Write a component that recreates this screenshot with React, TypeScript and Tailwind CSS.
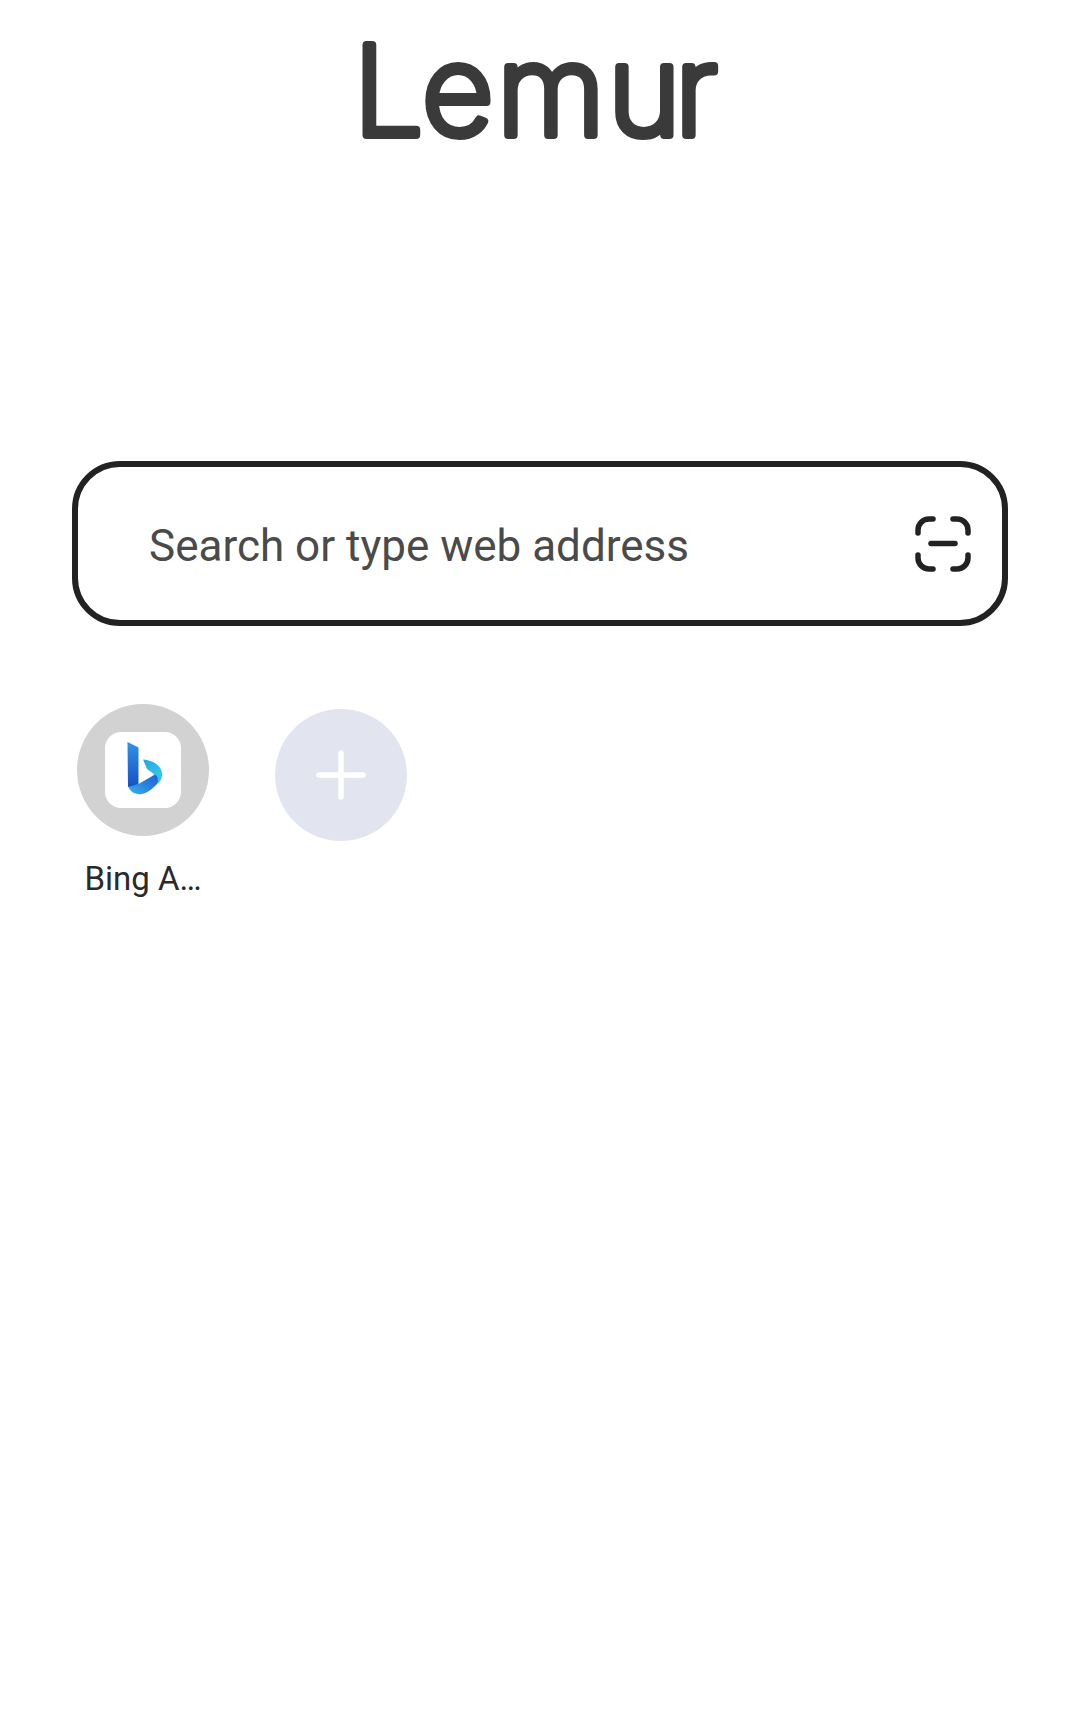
// App.tsx
// Pantalla de inicio: logo, buscador y accesos directos

function LemurLogo() {
  return (
    <svg width="400" height="170" viewBox="0 0 400 170" aria-label="Lemur">
      <text
        x="13.5 82 157 268 335"
        y="120"
        fontFamily="Inter, sans-serif"
        fontSize="124"
        fontWeight="200"
        fill="#3a3a3a"
        stroke="#3a3a3a"
        strokeWidth="8"
        strokeLinejoin="round"
      >
        Lemur
      </text>
    </svg>
  );
}

function ScanIcon() {
  return (
    <svg width="60" height="60" viewBox="0 0 60 60" fill="none" stroke="#222222" strokeWidth="5.5" strokeLinecap="round">
      <path d="M5 19v-3a11 11 0 0 1 11-11h4" />
      <path d="M40 5h4a11 11 0 0 1 11 11v3" />
      <path d="M5 41v3a11 11 0 0 0 11 11h4" />
      <path d="M40 55h4a11 11 0 0 0 11-11v-3" />
      <path d="M18 29.5h24" />
    </svg>
  );
}

function BingIcon() {
  return (
    <svg width="76" height="76" viewBox="0 0 76 76">
      <defs>
        <linearGradient id="bingStem" x1="0" y1="0" x2="0" y2="1">
          <stop offset="0" stopColor="#2f93e6" />
          <stop offset="1" stopColor="#1650c6" />
        </linearGradient>
        <linearGradient id="bingBand" x1="0" y1="1" x2="1" y2="0">
          <stop offset="0" stopColor="#35b7ec" />
          <stop offset="0.55" stopColor="#2a7ee2" />
          <stop offset="1" stopColor="#1d5fd6" />
        </linearGradient>
        <linearGradient id="bingTop" x1="0" y1="0" x2="1" y2="1">
          <stop offset="0" stopColor="#2ba4df" />
          <stop offset="1" stopColor="#2fd0ee" />
        </linearGradient>
      </defs>
      <path d="M38 27.5 C48 28.5 56 33 57 41 C57.5 45 56 49 52.5 52 L49 42 L42 37 Z" fill="url(#bingTop)" />
      <path d="M23 53 L33.5 52 L50 42.5 C52.5 44 54 48 52 52 C47.5 57 42 61 37 62 C31 63 24 60 23 53 Z" fill="url(#bingBand)" />
      <path d="M22.5 10 L33.5 15.5 L33.5 52 L23 55 Z" fill="url(#bingStem)" />
    </svg>
  );
}

export default function App() {
  return (
    <div className="min-h-[1712px] w-[1078px] bg-white font-['Roboto',sans-serif]">
      <div className="flex justify-center pt-[15px] pl-[2px]">
        <LemurLogo />
      </div>

      <div className="ml-[72px] mt-[276px] flex h-[165px] w-[936px] items-center justify-between rounded-[48px] border-[6px] border-[#222222] pl-[71px] pr-[29px]">
        <span className="pt-[4px] text-[44px] leading-none text-[#4a4a4a]">Search or type web address</span>
        <ScanIcon />
      </div>

      <div className="ml-[77px] mt-[78px] flex gap-[66px]">
        <div className="flex w-[132px] flex-col items-center">
          <div className="flex h-[132px] w-[132px] items-center justify-center rounded-full bg-[#d2d2d2]">
            <div className="h-[76px] w-[76px] rounded-[16px] bg-white">
              <BingIcon />
            </div>
          </div>
          <p className="mt-[23px] whitespace-nowrap text-[33px] leading-[40px] text-[#2a2a2a]">Bing A…</p>
        </div>

        <div className="mt-[5px] flex h-[132px] w-[132px] items-center justify-center rounded-full bg-[#e2e5ef]">
          <svg width="50" height="50" viewBox="0 0 50 50" stroke="#ffffff" strokeWidth="5.5" strokeLinecap="round">
            <path d="M25 3v44M3 25h44" />
          </svg>
        </div>
      </div>
    </div>
  );
}
